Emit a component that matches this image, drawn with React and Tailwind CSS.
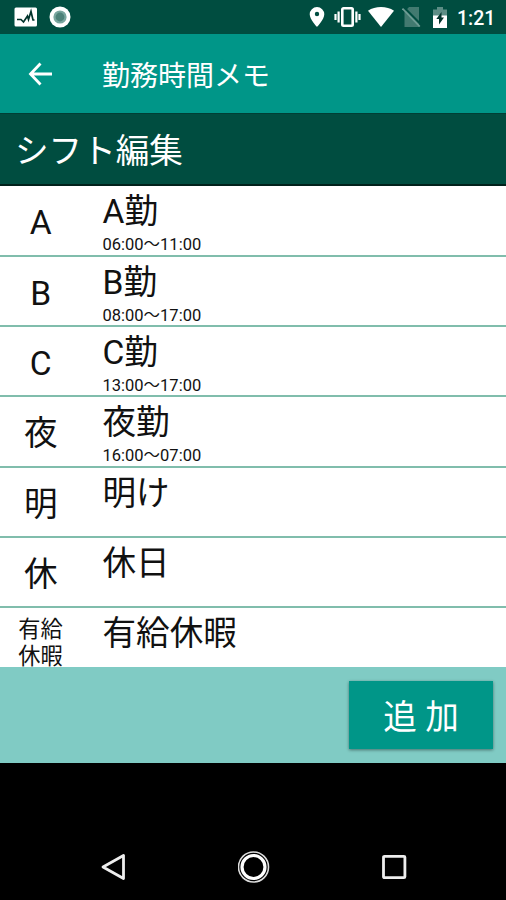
import React from "react";

const shifts = [
  { mark: "A", name: "A勤", time: "06:00〜11:00" },
  { mark: "B", name: "B勤", time: "08:00〜17:00" },
  { mark: "C", name: "C勤", time: "13:00〜17:00" },
  { mark: "夜", name: "夜勤", time: "16:00〜07:00" },
  { mark: "明", name: "明け" },
  { mark: "休", name: "休日" },
  { mark: "有給休暇", name: "有給休暇" },
];

const StatusBar = () => (
  <div className="flex h-[34px] shrink-0 items-center bg-[#004d40] text-white">
    <svg className="ml-[14px]" width="24" height="20" viewBox="0 0 24 20">
      <rect x="0.5" y="0.5" width="22.5" height="19" rx="1.5" fill="#fff" />
      <path
        d="M3 12.5h4l2.500 2.500 4-6 1 3.500 2.500-8 2 8.500h1.500"
        fill="none"
        stroke="#00332b"
        strokeWidth="1.7"
      />
    </svg>
    <svg className="ml-[11px]" width="22" height="22" viewBox="0 0 22 22">
      <circle cx="11" cy="11" r="10.5" fill="#fff" />
      <circle cx="11" cy="11" r="6.6" fill="#79a69f" />
      <circle cx="11" cy="11" r="4.4" fill="#4d8279" />
    </svg>

    {/* Location, vibrate, wifi, no sim, battery */}
    <svg className="ml-auto" width="16" height="20" viewBox="0 0 16 20">
      <path
        fill="#fff"
        fillRule="evenodd"
        d="M8 0a7.300 7.300 0 0 0-7.300 7.300c0 5.200 7.300 12.700 7.300 12.700s7.300-7.500 7.300-12.700a7.300 7.300 0 0 0-7.300-7.300zm0 4.800a2.200 2.200 0 1 1 0 4.400 2.200 2.200 0 0 1 0-4.400z"
      />
    </svg>
    <svg className="ml-[9px]" width="27" height="20" viewBox="0 0 27 20">
      <rect x="8.300" y="1.300" width="10.400" height="17.400" rx="1.200" fill="none" stroke="#fff" strokeWidth="2.600" />
      <path
        d="M1.500 7v6M4.600 4.500v11M22.400 4.500v11M25.500 7v6"
        fill="none"
        stroke="#fff"
        strokeWidth="2.200"
      />
    </svg>
    <svg className="ml-[7px]" width="26" height="20" viewBox="0 0 26 20">
      <path fill="#fff" d="M13 20 0 3.800C3.700 1.200 8.200 0 13 0s9.300 1.200 13 3.800z" />
    </svg>
    <svg className="ml-[8px]" width="19" height="20" viewBox="0 0 19 20">
      <path fill="#427a70" d="M7 0h10v20H2.500V5z" />
      <path d="M2 0.500 19 17.500" stroke="#004d40" strokeWidth="2.200" />
      <path d="M0.500 1.500 17.800 19.500" stroke="#6f9d95" strokeWidth="1.800" />
    </svg>
    <svg className="ml-[11px]" width="16" height="22" viewBox="0 0 16 22">
      <path fill="#5c8d85" d="M1 3.500h4V1h6v2.500h4V10H1z" />
      <path fill="#fff" d="M1 9.500h14V22H1z" />
      <path fill="#00332b" d="M9.500 6v5.500h2.500L7 18.500v-5.500H4.300z" />
    </svg>
    <span className="mr-[11px] ml-[9px] w-[38px] pt-[4px] text-[19.500px] leading-[30px] font-medium whitespace-nowrap">
      1:21
    </span>
  </div>
);

const AppBar = () => (
  <div className="flex h-[79px] shrink-0 items-center bg-[#009688] text-white">
    <svg className="ml-[28px]" width="24" height="24" viewBox="0 0 24 24">
      <path
        d="M12.500 1.500 2.500 12l10 10.500M2.500 12H24"
        fill="none"
        stroke="#fff"
        strokeWidth="2.800"
      />
    </svg>
    <h1 className="ml-[50px] pt-[6px] text-[28px] leading-[73px] font-normal">勤務時間メモ</h1>
  </div>
);

const ShiftRow = ({ mark, name, time }) => (
  <li className="flex h-[70.300px] shrink-0 border-b-2 border-[#80bdac]">
    <div className="flex w-[81.500px] justify-center">
      {mark.length > 1 ? (
        <span className="w-[45px] pt-[8px] text-[22.200px] leading-[27px]">{mark}</span>
      ) : (
        <span className="pt-[2px] text-[33.600px] leading-[69px]">{mark}</span>
      )}
    </div>
    <div className="ml-[21px] flex flex-col">
      <span className="text-[33.600px] leading-[51px]">{name}</span>
      {time && <span className="text-[16.500px] leading-[15px]">{time}</span>}
    </div>
  </li>
);

const NavBar = () => (
  <div className="flex h-[67px] items-center justify-between pr-[99px] pl-[100px]">
    <svg width="26" height="28" viewBox="0 0 26 28">
      <path d="M23.500 2.500v23L3 14z" fill="none" stroke="#eee" strokeWidth="2.800" strokeLinejoin="round" />
    </svg>
    <svg width="32" height="32" viewBox="0 0 32 32">
      <circle cx="15.500" cy="16" r="15" fill="none" stroke="#ddd" strokeWidth="1.600" />
      <circle cx="15.500" cy="16" r="11.500" fill="none" stroke="#fff" strokeWidth="3.200" />
    </svg>
    <svg width="26" height="26" viewBox="0 0 26 26">
      <rect x="2.500" y="2.300" width="21.400" height="21.400" rx="1" fill="none" stroke="#eee" strokeWidth="2.800" />
    </svg>
  </div>
);

const App = () => {
  return (
    <div
      lang="ja"
      className="flex h-[900px] w-[506px] flex-col overflow-hidden bg-black font-[Roboto,'Noto_Sans_CJK_JP',sans-serif]"
    >
      <StatusBar />
      <AppBar />
      <h2 className="h-[73.400px] shrink-0 border-t border-b-2 border-t-[#003f35] border-b-[#00211b] bg-[#004d40] pt-[3px] pl-[15px] text-[33.600px] leading-[70px] font-normal text-white">
        シフト編集
      </h2>

      <ul className="flex h-[480.600px] shrink-0 flex-col overflow-hidden bg-white text-[#111]">
        {shifts.map((shift) => (
          <ShiftRow key={shift.name} {...shift} />
        ))}
      </ul>

      <div className="flex h-[96px] shrink-0 items-start justify-end bg-[#80cbc4] pt-[14px] pr-[13px]">
        <button className="h-[68px] w-[144px] bg-[#009688] pt-[5px] text-[33.600px] leading-[63px] text-white shadow-[0_1px_3px_rgba(0,0,0,0.45)]">
          追 加
        </button>
      </div>

      <div className="mt-auto">
        <NavBar />
      </div>
    </div>
  );
};

export default App;
